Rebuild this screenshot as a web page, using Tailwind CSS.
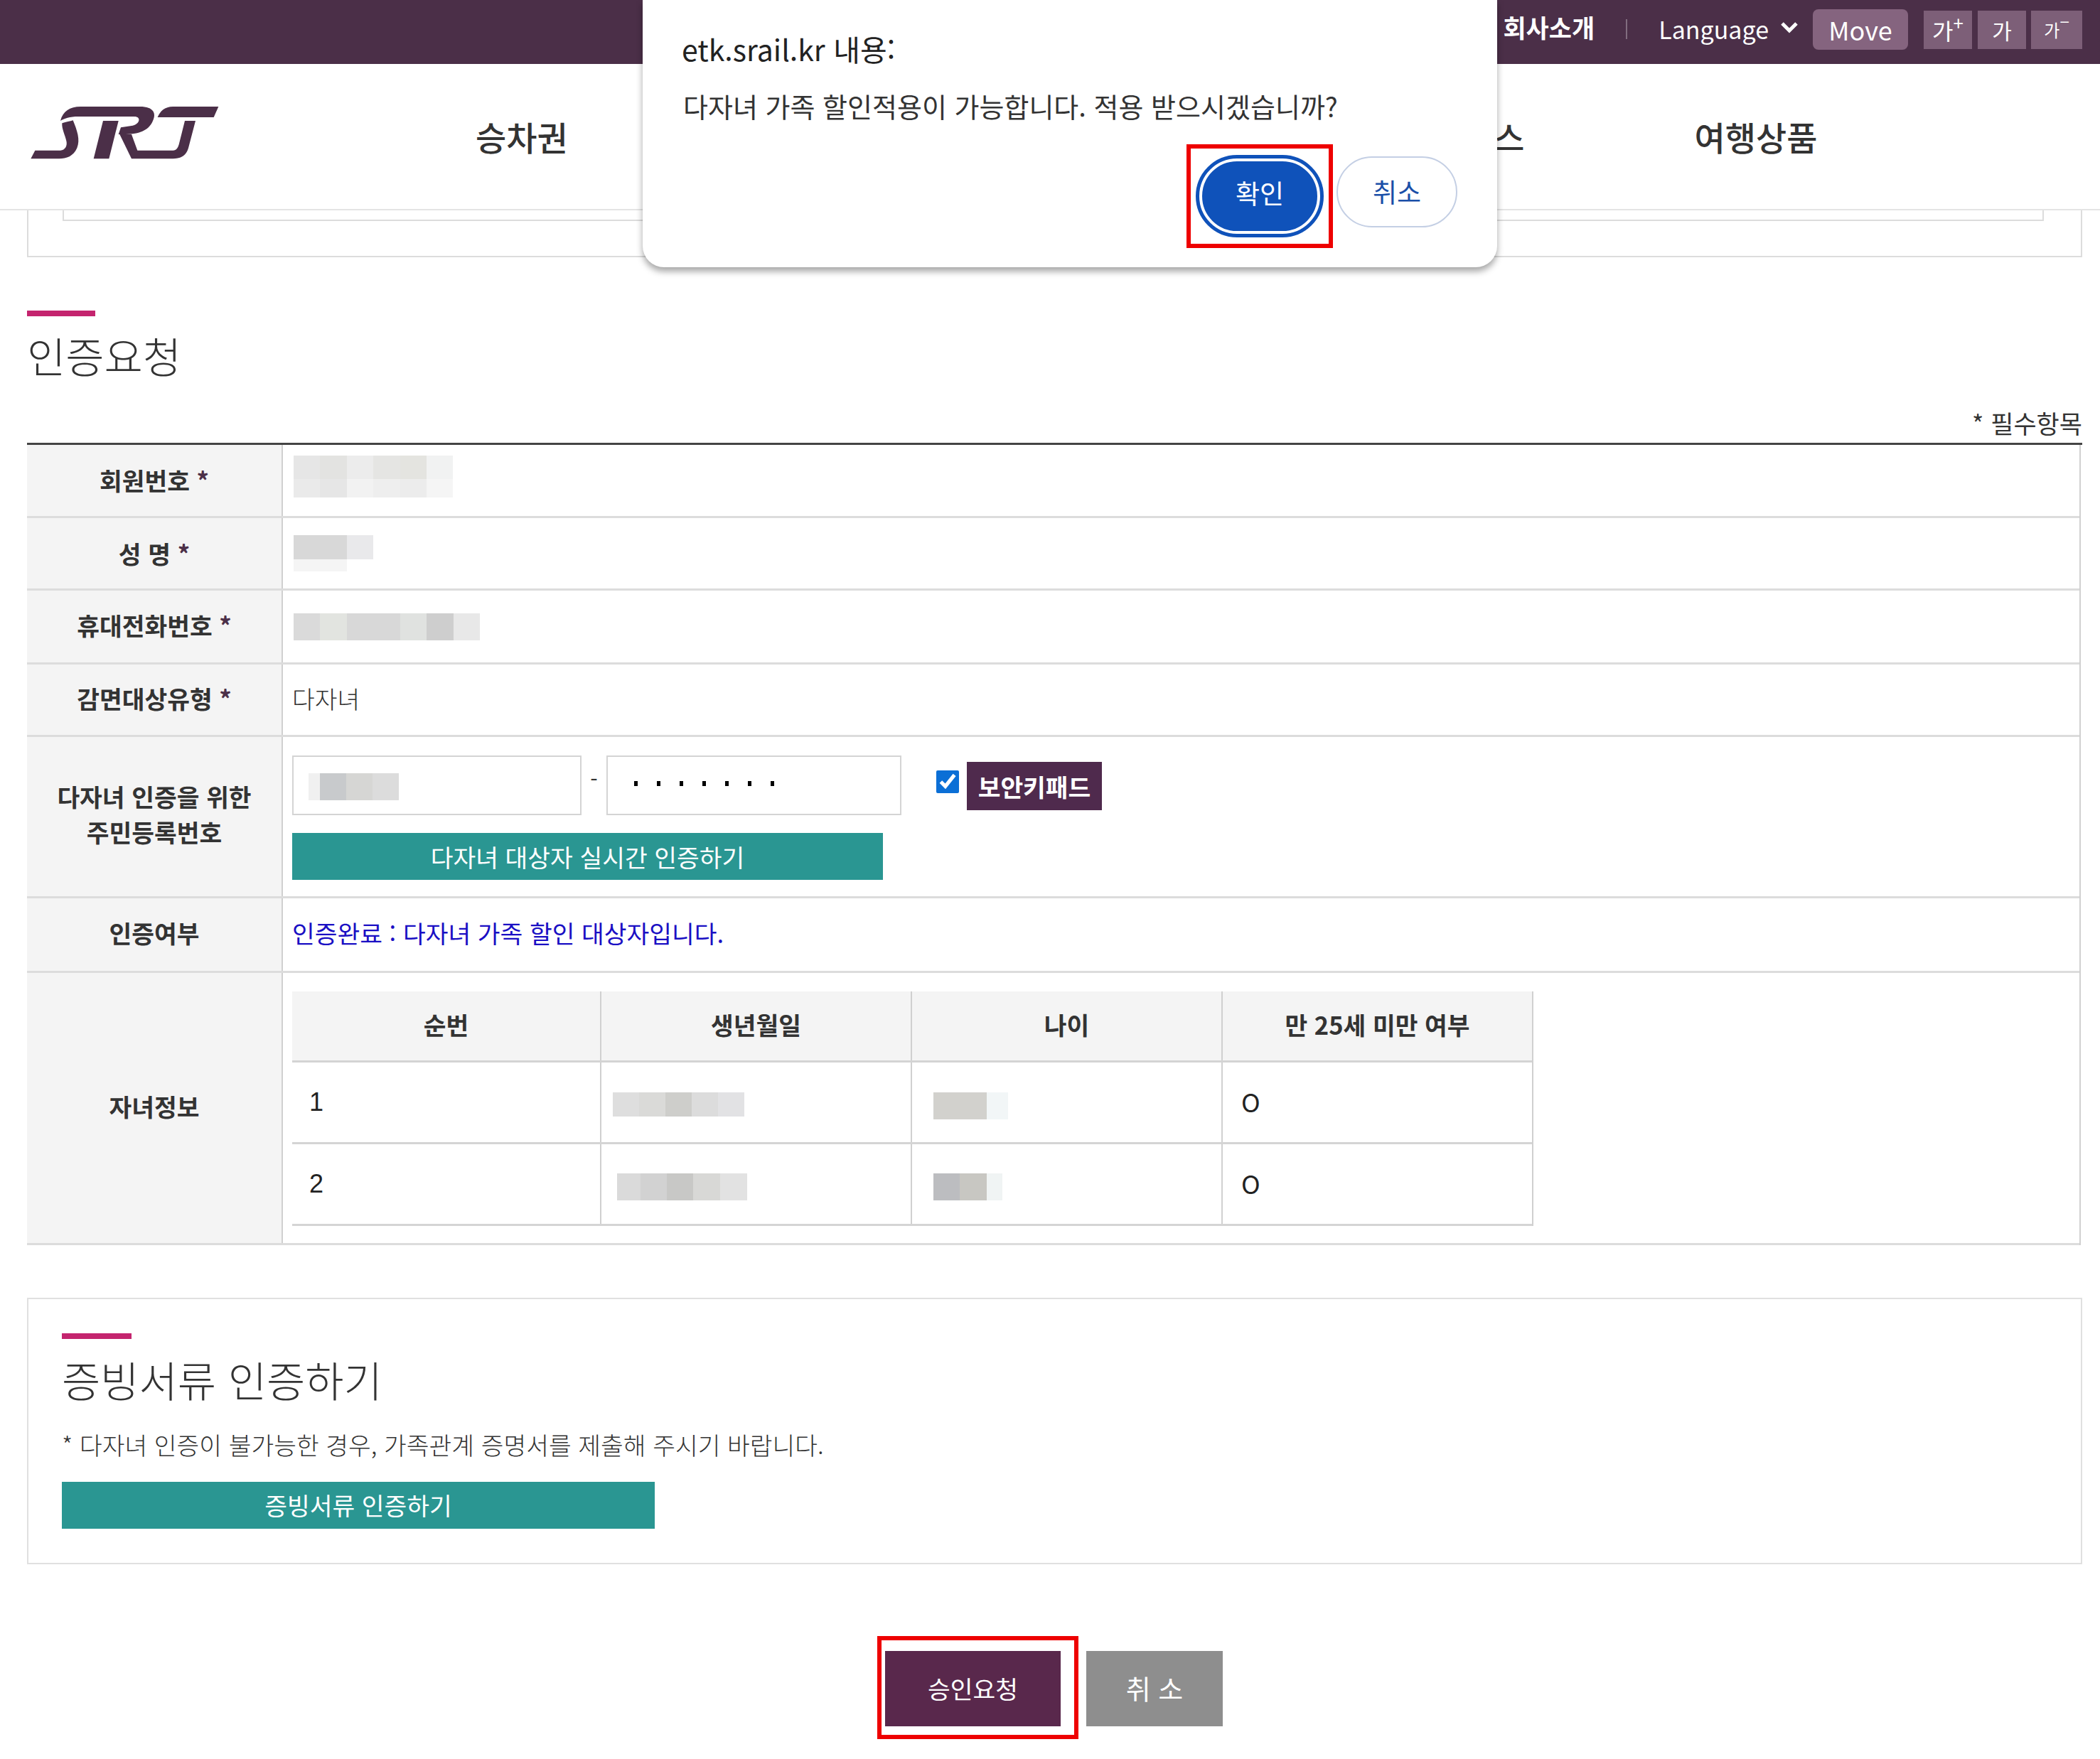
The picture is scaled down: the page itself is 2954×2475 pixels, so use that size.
<!DOCTYPE html>
<html lang="ko">
<head>
  <meta charset="UTF-8">
  <title>인증요청</title>
  <script src="https://cdn.jsdelivr.net/npm/@tailwindcss/browser@4"></script>
</head>
<body class="bg-white text-[#333] font-['Noto_Sans_CJK_KR','Noto_Sans',sans-serif] w-[2954px] h-[2475px] overflow-hidden relative">

  <!-- top bar -->
  <div class="h-[90px] bg-[#4b2f48] flex items-start justify-end pt-[13px] pr-[25px] text-white">
    <span class="text-[35px] font-bold leading-[50px]">회사소개</span>
    <span class="w-[2px] h-[28px] bg-white/30 mt-[14px] ml-[44px]"></span>
    <span class="text-[34px] leading-[56px] ml-[44px]">Language</span>
    <svg class="w-[26px] h-[18px] mt-[17px] ml-[16px]" viewBox="0 0 26 18"><path d="M3 3l10 10L23 3" fill="none" stroke="#fff" stroke-width="5"/></svg>
    <span class="w-[134px] h-[57px] ml-[20px] rounded-[8px] bg-[#85647f] text-[36px] leading-[57px] text-center">Move</span>
    <span class="w-[68px] h-[54px] ml-[22px] mt-[2px] bg-[#7d5f78] text-[32px] leading-[54px] text-center">가<sup class="text-[26px]">+</sup></span>
    <span class="w-[68px] h-[54px] ml-[8px] mt-[2px] bg-[#7d5f78] text-[30px] leading-[54px] text-center">가</span>
    <span class="w-[72px] h-[54px] ml-[7px] mt-[2px] bg-[#7d5f78] text-[24px] leading-[54px] text-center">가<sup class="text-[24px]">−</sup></span>
  </div>

  <!-- header -->
  <div class="h-[206px] border-b-2 border-[#e4e4e4] flex items-start">
    <svg class="w-[290px] h-[95px] mt-[50px] ml-[30px] shrink-0" viewBox="0 0 870 285" fill="#4b2f48">
      <path d="M165 90C175 50 205 30 250 30L500 30C560 30 570 60 555 90C540 125 510 145 440 147L410 147L420 118L470 110C490 105 500 90 495 80C490 72 480 72 470 72L240 72C205 72 180 80 165 90Z"/>
      <path d="M172 100C190 95 205 92 218 88C235 130 250 170 235 205C220 240 190 250 160 250L40 250L58 215L165 215C185 215 195 195 190 175C185 150 170 125 172 100Z"/>
      <path d="M345 90L410 90L370 250L305 250Z"/>
      <path d="M415 147L465 147L490 215L640 215C655 215 660 205 665 190L690 90L735 90L705 205C695 240 670 250 640 250L465 250Z"/>
      <path d="M640 30L832 30L812 75L575 75C585 50 605 30 640 30Z"/>
    </svg>
    <nav class="flex text-[47px] font-medium leading-[56px] mt-[74px] ml-[349px] text-[#333]">
      <span>승차권</span>
      <span class="ml-[1216px]">서비스</span>
      <span class="ml-[239px]">여행상품</span>
    </nav>
  </div>

  <main class="pl-[38px] pr-[25px]">
    <!-- scrolled section remainder -->
    <div class="h-[66px] border-x-2 border-b-2 border-[#dcdcdc] px-[48px]">
      <div class="h-[15px] border-x-2 border-b-2 border-[#dcdcdc] mr-[4px]"></div>
    </div>

    <!-- 인증요청 -->
    <div class="w-[96px] h-[8px] bg-[#c4246e] mt-[75px]"></div>
    <h2 class="text-[59px] font-light leading-[80px] mt-[15px] text-[#333]">인증요청</h2>
    <p class="text-right text-[35px] leading-[40px] mt-[35px] text-[#333]">* 필수항목</p>

    <div class="border-t-[3px] border-[#444] text-[34.5px] mt-[8px]">
      <div class="border-r-2 border-[#d0d0d0] mr-[2px]">
        <div class="flex h-[103px] border-b-[3px] border-[#dcdcdc]">
          <div class="w-[360px] shrink-0 bg-[#f4f4f4] border-r-2 border-[#d0d0d0] flex items-center justify-center font-bold">회원번호&nbsp;<span class="text-[#4b2f48]">*</span></div>
          <div class="flex-1 pl-[15px] pt-[15px]">
            <div class="flex h-[33px]">
              <div class="w-[37px] bg-[#e6e6e6]"></div><div class="w-[38px] bg-[#e3e3e1]"></div><div class="w-[37px] bg-[#ececec]"></div><div class="w-[38px] bg-[#e5e5e3]"></div><div class="w-[37px] bg-[#e4e4e0]"></div><div class="w-[37px] bg-[#f1f2f2]"></div>
            </div>
            <div class="flex h-[26px]">
              <div class="w-[37px] bg-[#eaeaea]"></div><div class="w-[38px] bg-[#e6e6e6]"></div><div class="w-[37px] bg-[#f2f2f2]"></div><div class="w-[38px] bg-[#eeeeee]"></div><div class="w-[37px] bg-[#ececec]"></div><div class="w-[37px] bg-[#f5f5f5]"></div>
            </div>
          </div>
        </div>
        <div class="flex h-[102px] border-b-[3px] border-[#dcdcdc]">
          <div class="w-[360px] shrink-0 bg-[#f4f4f4] border-r-2 border-[#d0d0d0] flex items-center justify-center font-bold">성 명&nbsp;<span class="text-[#4b2f48]">*</span></div>
          <div class="flex-1 pl-[15px] pt-[24px]">
            <div class="flex w-[112px] h-[34px]"><div class="w-[75px] bg-[#d8d8d8]"></div><div class="w-[37px] bg-[#e9e9eb]"></div></div>
            <div class="w-[75px] h-[17px] bg-[#f5f5f5]"></div>
          </div>
        </div>
        <div class="flex h-[104px] border-b-[3px] border-[#dcdcdc]">
          <div class="w-[360px] shrink-0 bg-[#f4f4f4] border-r-2 border-[#d0d0d0] flex items-center justify-center font-bold pb-[3px]">휴대전화번호&nbsp;<span class="text-[#4b2f48]">*</span></div>
          <div class="flex-1 pl-[15px] pt-[32px]">
            <div class="flex w-[262px] h-[38px]">
              <div class="w-[37px] bg-[#dadada]"></div><div class="w-[38px] bg-[#e2e4e0]"></div><div class="w-[75px] bg-[#d8d8d8]"></div><div class="w-[37px] bg-[#e0e2e0]"></div><div class="w-[38px] bg-[#cecece]"></div><div class="w-[37px] bg-[#e8e8e8]"></div>
            </div>
          </div>
        </div>
        <div class="flex h-[102px] border-b-[3px] border-[#dcdcdc]">
          <div class="w-[360px] shrink-0 bg-[#f4f4f4] border-r-2 border-[#d0d0d0] flex items-center justify-center font-bold pb-[4px]">감면대상유형&nbsp;<span class="text-[#4b2f48]">*</span></div>
          <div class="flex-1 pl-[13px] flex items-center font-light pb-[3px]">다자녀</div>
        </div>

        <div class="flex h-[227px] border-b-[3px] border-[#dcdcdc]">
          <div class="w-[360px] shrink-0 bg-[#f4f4f4] border-r-2 border-[#d0d0d0] flex items-center justify-center text-center font-bold leading-[50px] pb-[8px]">다자녀 인증을 위한<br>주민등록번호</div>
          <div class="flex-1 pl-[13px] pt-[26px]">
            <div class="flex items-start">
              <div class="w-[407px] h-[84px] border-2 border-[#d4d4d4] pl-[21px] pt-[23px]">
                <div class="flex w-[127px] h-[38px]"><div class="w-[16px] bg-[#f0f0f0]"></div><div class="w-[37px] bg-[#c8cacc]"></div><div class="w-[37px] bg-[#d6d6d4]"></div><div class="w-[37px] bg-[#dcdcdc]"></div></div>
              </div>
              <span class="w-[35px] text-center leading-[36px] text-[30px] mt-[14px]">-</span>
              <div class="w-[415px] h-[84px] border-2 border-[#d4d4d4] pl-[37px] pt-[34px] flex gap-[27px]">
                <span class="w-[5px] h-[7px] bg-black"></span><span class="w-[5px] h-[7px] bg-black"></span><span class="w-[5px] h-[7px] bg-black"></span><span class="w-[5px] h-[7px] bg-black"></span><span class="w-[5px] h-[7px] bg-black"></span><span class="w-[5px] h-[7px] bg-black"></span><span class="w-[5px] h-[7px] bg-black"></span>
              </div>
              <input type="checkbox" checked class="w-[32px] h-[32px] ml-[49px] mt-[21px] accent-[#0b6fd6]">
              <div class="w-[190px] h-[68px] ml-[11px] mt-[9px] bg-[#4f2a4d] text-white font-bold text-[34.5px] leading-[68px] text-center">보안키패드</div>
            </div>
            <div class="w-[831px] h-[66px] mt-[25px] bg-[#2a9692] text-white text-[34.5px] leading-[66px] text-center">다자녀 대상자 실시간 인증하기</div>
          </div>
        </div>

        <div class="flex h-[105px] border-b-[3px] border-[#dcdcdc]">
          <div class="w-[360px] shrink-0 bg-[#f4f4f4] border-r-2 border-[#d0d0d0] flex items-center justify-center font-bold pb-[4px]">인증여부</div>
          <div class="flex-1 pl-[13px] flex items-center text-[#1a0fc4] pb-[4px]">인증완료 : 다자녀 가족 할인 대상자입니다.</div>
        </div>

        <div class="flex h-[383px] border-b-[3px] border-[#dcdcdc]">
          <div class="w-[360px] shrink-0 bg-[#f4f4f4] border-r-2 border-[#d0d0d0] flex items-center justify-center font-bold pb-[4px]">자녀정보</div>
          <div class="flex-1 pl-[13px] pt-[26px]">
            <div class="w-[1746px] border-r-2 border-[#d0d0d0]">
              <div class="flex h-[100px] bg-[#f4f4f4] border-b-[3px] border-[#d4d4d4] font-bold text-center leading-[93px]">
                <div class="w-[435px] border-r-2 border-[#d0d0d0]">순번</div>
                <div class="w-[437px] border-r-2 border-[#d0d0d0]">생년월일</div>
                <div class="w-[437px] border-r-2 border-[#d0d0d0]">나이</div>
                <div class="flex-1">만 25세 미만 여부</div>
              </div>
              <div class="flex h-[115px] border-b-[3px] border-[#d4d4d4]">
                <div class="w-[435px] border-r-2 border-[#d0d0d0] pl-[24px] leading-[112px] font-['Liberation_Sans'] text-[36px] text-[#222]">1</div>
                <div class="w-[437px] border-r-2 border-[#d0d0d0] pl-[16px] pt-[42px]">
                  <div class="flex h-[34px] w-[185px]"><div class="w-[37px] bg-[#dedede]"></div><div class="w-[37px] bg-[#dadad8]"></div><div class="w-[37px] bg-[#cececb]"></div><div class="w-[37px] bg-[#dcdcdc]"></div><div class="w-[37px] bg-[#e2e2e4]"></div></div>
                </div>
                <div class="w-[437px] border-r-2 border-[#d0d0d0] pl-[30px] pt-[42px]">
                  <div class="flex h-[38px]"><div class="w-[75px] bg-[#d2d1cd]"></div><div class="w-[30px] bg-[#f2f6f7]"></div></div>
                </div>
                <div class="flex-1 pl-[26px] leading-[108px] text-[36px] text-[#222]">O</div>
              </div>
              <div class="flex h-[115px] border-b-[3px] border-[#d4d4d4]">
                <div class="w-[435px] border-r-2 border-[#d0d0d0] pl-[24px] leading-[112px] font-['Liberation_Sans'] text-[36px] text-[#222]">2</div>
                <div class="w-[437px] border-r-2 border-[#d0d0d0] pl-[22px] pt-[41px]">
                  <div class="flex h-[38px] w-[183px]"><div class="w-[33px] bg-[#dadada]"></div><div class="w-[37px] bg-[#d2d2d2]"></div><div class="w-[37px] bg-[#c8c8c6]"></div><div class="w-[38px] bg-[#d8d8d6]"></div><div class="w-[38px] bg-[#e2e2e2]"></div></div>
                </div>
                <div class="w-[437px] border-r-2 border-[#d0d0d0] pl-[30px] pt-[41px]">
                  <div class="flex h-[38px]"><div class="w-[37px] bg-[#bcbdc0]"></div><div class="w-[38px] bg-[#c8c7c2]"></div><div class="w-[22px] bg-[#f0f4f4]"></div></div>
                </div>
                <div class="flex-1 pl-[26px] leading-[108px] text-[36px] text-[#222]">O</div>
              </div>
            </div>
          </div>
        </div>
      </div>
    </div>

    <!-- 증빙서류 -->
    <div class="h-[375px] mt-[74px] border-2 border-[#e0e0e0] pl-[47px] pt-[48px]">
      <div class="w-[98px] h-[8px] bg-[#c4246e]"></div>
      <h2 class="text-[59px] font-light leading-[80px] mt-[17px]">증빙서류 인증하기</h2>
      <p class="text-[34.5px] font-light leading-[44px] mt-[29px]">* 다자녀 인증이 불가능한 경우, 가족관계 증명서를 제출해 주시기 바랍니다.</p>
      <div class="w-[834px] h-[66px] mt-[31px] bg-[#2a9692] text-white text-[34.5px] leading-[64px] text-center">증빙서류 인증하기</div>
    </div>

    <!-- bottom buttons -->
    <div class="flex mt-[122px] ml-[1196px]">
      <div class="border-[6px] border-[#ee0000] pl-[5px] pt-[15px] pr-[19px] pb-[12px] -mt-[21px]">
        <div class="w-[247px] h-[106px] bg-[#59284c] text-white text-[34.5px] leading-[104px] text-center">승인요청</div>
      </div>
      <div class="w-[192px] h-[106px] ml-[11px] bg-[#8e8e8e] text-white text-[38px] leading-[104px] text-center">취 소</div>
    </div>
  </main>

  <!-- browser confirm dialog -->
  <div class="absolute left-[904px] top-0 w-[1202px] h-[376px] bg-white rounded-b-[30px] shadow-[0_6px_10px_rgba(0,0,0,0.35)]">
    <p class="absolute left-[55px] top-[40px] text-[41px] leading-[56px] text-[#222]">etk.srail.kr 내용:</p>
    <p class="absolute left-[57px] top-[126px] text-[38px] leading-[46px] text-[#333]">다자녀 가족 할인적용이 가능합니다. 적용 받으시겠습니까?</p>
    <div class="absolute left-[765px] top-[203px] w-[206px] h-[146px] border-[6px] border-[#ee0000] flex items-center justify-center">
      <div class="w-[180px] h-[116px] rounded-full bg-[#0f52ba] border-[5px] border-[#0f52ba] outline-[4px] outline-white -outline-offset-[9px] text-white text-[37px] leading-[96px] text-center">확인</div>
    </div>
    <div class="absolute left-[976px] top-[220px] w-[170px] h-[100px] rounded-full border-2 border-[#c4cfe4] text-[#1a4fa8] text-[37px] leading-[94px] text-center">취소</div>
  </div>
</body>
</html>
